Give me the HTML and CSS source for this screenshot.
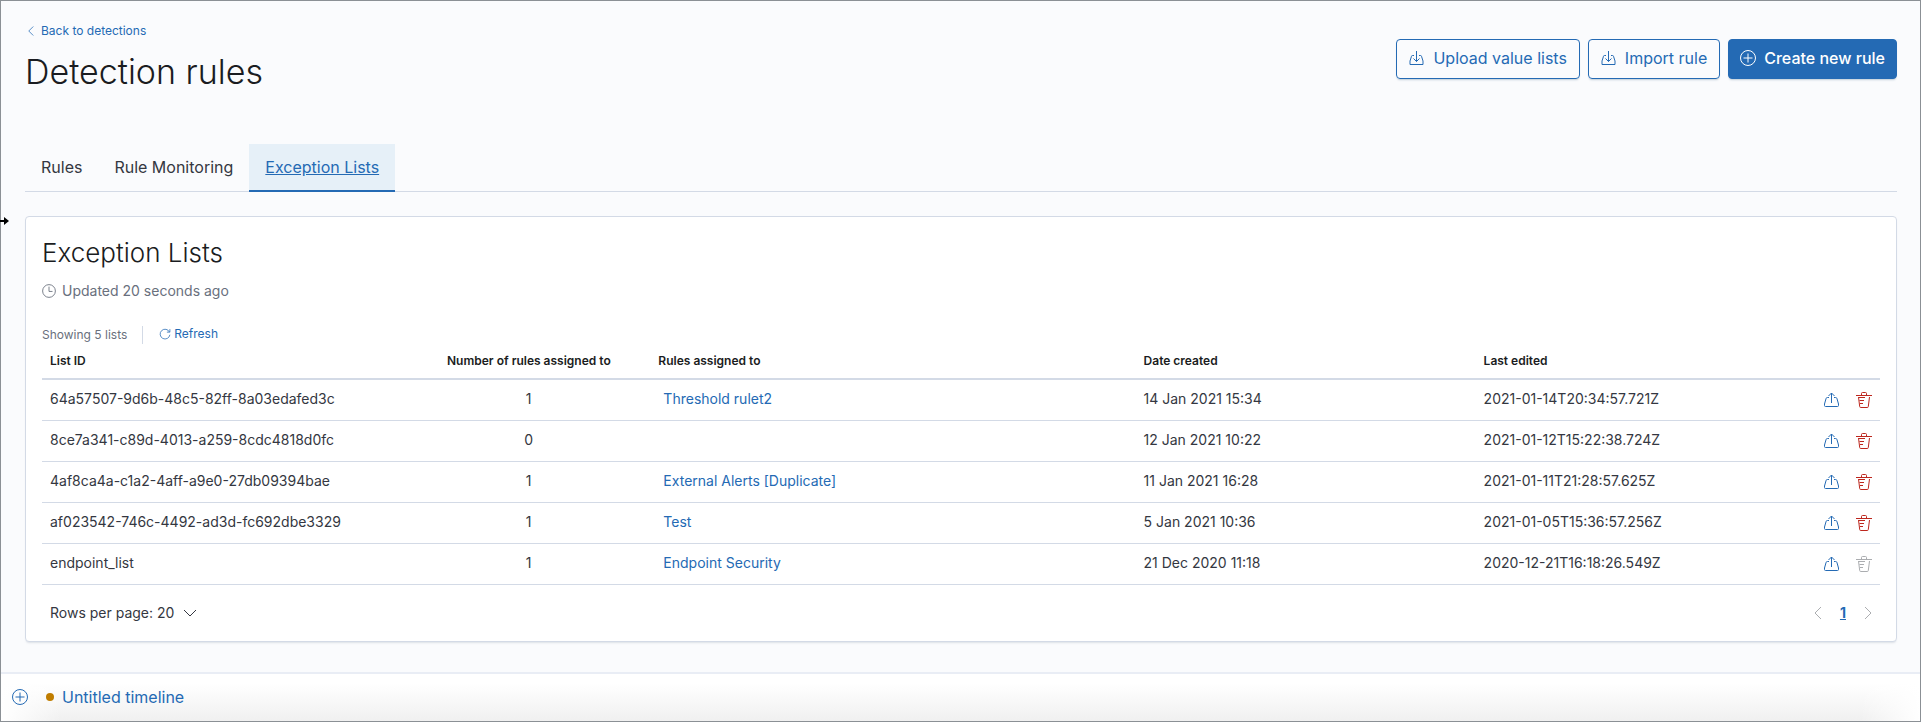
FILE: index.html
```
<!DOCTYPE html>
<html lang="en">
<head>
    <meta charset="UTF-8">
    <meta name="viewport" content="width=device-width, initial-scale=1.0">
    <title>Detection rules</title>
    <link rel="stylesheet" href="styles.css">
</head>
<body>
    <svg class="sprite" aria-hidden="true">
        <symbol id="icon-import" viewBox="0 0 16 16">
            <path d="M5 5.500H3.500a1 1 0 0 0-1 .8L1 11v3.500h13V11l-1.500-4.700a1 1 0 0 0-1-.8H10M7.500 1v10.500M4.500 8.500l3 3 3-3"/>
        </symbol>
        <symbol id="icon-export" viewBox="0 0 16 16">
            <path d="M5 5.500H3.500a1.500 1.500 0 0 0-1.500 1.200L.5 12v1.500a1 1 0 0 0 1 1h12a1 1 0 0 0 1-1V12L13 6.700a1.500 1.500 0 0 0-1.500-1.200H10M7.500 11V1M4.500 4l3-3 3 3"/>
        </symbol>
        <symbol id="icon-trash" viewBox="0 0 16 16">
            <path d="M0 3.500h16M5.500 3.500v-2a1 1 0 0 1 1-1h3a1 1 0 0 1 1 1v2M2.500 5l1.200 9.500a1 1 0 0 0 1 1h6.600a1 1 0 0 0 1-1L13.500 5M3 5.500h6M3.500 8.500H8M4 11.500h3"/>
        </symbol>
        <symbol id="icon-plus" viewBox="0 0 16 16">
            <circle cx="8" cy="8" r="7.500"/>
            <path d="M8 3.500v9M3.500 8h9"/>
        </symbol>
        <symbol id="icon-clock" viewBox="0 0 16 16">
            <circle cx="8" cy="8" r="7.300"/>
            <path d="M8 3v5.500h4"/>
        </symbol>
        <symbol id="icon-refresh" viewBox="0 0 16 16">
            <path d="M10.500 5.500h4v-4M14 5.500A6.500 6.500 0 1 0 14.500 9"/>
        </symbol>
        <symbol id="icon-left" viewBox="0 0 16 16">
            <path d="M11 2L5 8l6 6"/>
        </symbol>
        <symbol id="icon-right" viewBox="0 0 16 16">
            <path d="M5 2l6 6-6 6"/>
        </symbol>
        <symbol id="icon-down" viewBox="0 0 16 16">
            <path d="M2 5l6 6 6-6"/>
        </symbol>
    </svg>

    <main class="page">
        <header class="header">
            <div class="heading">
                <a class="back" href="#"><svg class="icon icon-s"><use href="#icon-left"/></svg>Back to detections</a>
                <h1>Detection rules</h1>
            </div>
            <div class="actions">
                <button class="btn" type="button"><svg class="icon"><use href="#icon-import"/></svg>Upload value lists</button>
                <button class="btn" type="button"><svg class="icon"><use href="#icon-import"/></svg>Import rule</button>
                <button class="btn btn-fill" type="button"><svg class="icon"><use href="#icon-plus"/></svg>Create new rule</button>
            </div>
        </header>

        <nav class="tabs">
            <a class="tab" href="#">Rules</a>
            <a class="tab" href="#">Rule Monitoring</a>
            <a class="tab active" href="#">Exception Lists</a>
        </nav>

        <section class="panel">
            <h2>Exception Lists</h2>
            <div class="updated"><svg class="icon icon-m"><use href="#icon-clock"/></svg>Updated 20 seconds ago</div>

            <div class="utility">
                <span class="showing">Showing 5 lists</span>
                <button class="refresh" type="button"><svg class="icon icon-s"><use href="#icon-refresh"/></svg>Refresh</button>
            </div>

            <table class="lists">
                <thead>
                    <tr>
                        <th class="col-id">List ID</th>
                        <th class="col-num">Number of rules assigned to</th>
                        <th class="col-rules">Rules assigned to</th>
                        <th class="col-created">Date created</th>
                        <th class="col-edited">Last edited</th>
                        <th class="col-actions"></th>
                    </tr>
                </thead>
                <tbody>
                    <tr>
                        <td>64a57507-9d6b-48c5-82ff-8a03edafed3c</td>
                        <td class="col-num">1</td>
                        <td><a class="rule" href="#">Threshold rulet2</a></td>
                        <td>14 Jan 2021 15:34</td>
                        <td>2021-01-14T20:34:57.721Z</td>
                        <td>
                            <div class="row-actions">
                                <button class="icon-btn" type="button" aria-label="Export list"><svg class="icon"><use href="#icon-export"/></svg></button>
                                <button class="icon-btn danger" type="button" aria-label="Delete list"><svg class="icon"><use href="#icon-trash"/></svg></button>
                            </div>
                        </td>
                    </tr>
                    <tr>
                        <td>8ce7a341-c89d-4013-a259-8cdc4818d0fc</td>
                        <td class="col-num">0</td>
                        <td></td>
                        <td>12 Jan 2021 10:22</td>
                        <td>2021-01-12T15:22:38.724Z</td>
                        <td>
                            <div class="row-actions">
                                <button class="icon-btn" type="button" aria-label="Export list"><svg class="icon"><use href="#icon-export"/></svg></button>
                                <button class="icon-btn danger" type="button" aria-label="Delete list"><svg class="icon"><use href="#icon-trash"/></svg></button>
                            </div>
                        </td>
                    </tr>
                    <tr>
                        <td>4af8ca4a-c1a2-4aff-a9e0-27db09394bae</td>
                        <td class="col-num">1</td>
                        <td><a class="rule" href="#">External Alerts [Duplicate]</a></td>
                        <td>11 Jan 2021 16:28</td>
                        <td>2021-01-11T21:28:57.625Z</td>
                        <td>
                            <div class="row-actions">
                                <button class="icon-btn" type="button" aria-label="Export list"><svg class="icon"><use href="#icon-export"/></svg></button>
                                <button class="icon-btn danger" type="button" aria-label="Delete list"><svg class="icon"><use href="#icon-trash"/></svg></button>
                            </div>
                        </td>
                    </tr>
                    <tr>
                        <td>af023542-746c-4492-ad3d-fc692dbe3329</td>
                        <td class="col-num">1</td>
                        <td><a class="rule" href="#">Test</a></td>
                        <td>5 Jan 2021 10:36</td>
                        <td>2021-01-05T15:36:57.256Z</td>
                        <td>
                            <div class="row-actions">
                                <button class="icon-btn" type="button" aria-label="Export list"><svg class="icon"><use href="#icon-export"/></svg></button>
                                <button class="icon-btn danger" type="button" aria-label="Delete list"><svg class="icon"><use href="#icon-trash"/></svg></button>
                            </div>
                        </td>
                    </tr>
                    <tr>
                        <td>endpoint_list</td>
                        <td class="col-num">1</td>
                        <td><a class="rule" href="#">Endpoint Security</a></td>
                        <td>21 Dec 2020 11:18</td>
                        <td>2020-12-21T16:18:26.549Z</td>
                        <td>
                            <div class="row-actions">
                                <button class="icon-btn" type="button" aria-label="Export list"><svg class="icon"><use href="#icon-export"/></svg></button>
                                <button class="icon-btn danger" type="button" aria-label="Delete list" disabled><svg class="icon"><use href="#icon-trash"/></svg></button>
                            </div>
                        </td>
                    </tr>
                </tbody>
            </table>

            <div class="pagination">
                <button class="per-page" type="button">Rows per page: 20<svg class="icon"><use href="#icon-down"/></svg></button>
                <div class="pages">
                    <button class="icon-btn" type="button" aria-label="Previous page" disabled><svg class="icon"><use href="#icon-left"/></svg></button>
                    <a class="page-num" href="#">1</a>
                    <button class="icon-btn" type="button" aria-label="Next page" disabled><svg class="icon"><use href="#icon-right"/></svg></button>
                </div>
            </div>
        </section>
    </main>

    <footer class="timeline">
        <button class="icon-btn" type="button" aria-label="Add timeline"><svg class="icon"><use href="#icon-plus"/></svg></button>
        <span class="dot"></span>
        <a class="timeline-link" href="#">Untitled timeline</a>
    </footer>

    <svg class="cursor" viewBox="0 0 10 12" aria-hidden="true">
        <path d="M0 5h4V2l5 4-5 4V7H0z"/>
    </svg>
</body>
</html>
```
FILE: styles.css
```
* {
    box-sizing: border-box;
}

body {
    display: flex;
    flex-direction: column;
    min-height: 100vh;
    margin: 0;
    border: 1px solid #8b9095;
    background: #fafbfd;
    color: #343741;
    font-family: Inter, "Liberation Sans", sans-serif;
    font-size: 14px;
    line-height: 20px;
}

a {
    color: #246ab4;
    text-decoration: none;
}

button {
    padding: 0;
    border: 0;
    background: none;
    color: #246ab4;
    font: inherit;
    cursor: pointer;
}

.sprite {
    display: none;
}

.icon {
    flex: none;
    width: 16px;
    height: 16px;
    fill: none;
    stroke: currentColor;
}

.icon-m {
    width: 14px;
    height: 14px;
}

.icon-s {
    width: 12px;
    height: 12px;
}

.page {
    flex: 1;
    padding: 20px 23px 24px 24px;
}

.header {
    display: flex;
    justify-content: space-between;
    align-items: flex-start;
    height: 123px;
}

.back {
    display: flex;
    align-items: center;
    gap: 4px;
    font-size: 12px;
}

h1, h2 {
    margin: 0;
    color: #1a1c21;
    font-weight: 300;
}

h1 {
    margin-top: 11px;
    font-size: 34px;
    line-height: 40px;
}

.actions {
    display: flex;
    gap: 8px;
    padding-top: 18px;
}

.btn {
    display: flex;
    align-items: center;
    gap: 8px;
    height: 40px;
    padding: 0 12px 2px;
    border: 1px solid #246ab4;
    border-radius: 4px;
    font-size: 16px;
    box-shadow: 0 2px 2px -1px rgba(54, 97, 126, 0.3);
}

.btn-fill {
    padding: 0 11px 2px;
    background: #246ab4;
    color: #fff;
    font-weight: 500;
}

.tabs {
    display: flex;
    border-bottom: 1px solid #d3dae6;
}

.tab {
    margin-bottom: -1px;
    padding: 11px 16px 13px;
    color: #343741;
    font-size: 16px;
    line-height: 24px;
}

.tab.active {
    background: #e6f0f8;
    color: #246ab4;
    text-decoration: underline;
    box-shadow: inset 0 -2px 0 #246ab4;
}

.panel {
    margin-top: 24px;
    padding: 16px;
    border: 1px solid #d3dae6;
    border-radius: 4px;
    background: #fff;
    box-shadow: 0 2px 2px -1px rgba(152, 162, 179, 0.3);
}

h2 {
    font-size: 26px;
    line-height: 40px;
}

.updated {
    display: flex;
    align-items: center;
    gap: 6px;
    margin-top: 8px;
    color: #69707d;
}

.utility {
    display: flex;
    align-items: center;
    margin-top: 24px;
    font-size: 12px;
    line-height: 18px;
}

.showing {
    padding-right: 15px;
    border-right: 1px solid #d3dae6;
    color: #69707d;
}

.refresh {
    display: flex;
    align-items: center;
    gap: 3px;
    margin-left: 16px;
    padding-bottom: 1px;
}

.lists {
    width: 100%;
    border-collapse: collapse;
    table-layout: fixed;
}

.lists th {
    height: 35px;
    padding: 0 8px 1px;
    border-bottom: 2px solid #d3dae6;
    color: #1a1c21;
    font-size: 12px;
    font-weight: 600;
    text-align: left;
}

.lists td {
    height: 41px;
    padding: 0 8px 2px;
    border-bottom: 1px solid #d3dae6;
    white-space: nowrap;
}

.col-id {
    width: 21.6%;
}

.lists .col-num {
    width: 11.5%;
    padding-right: 40px;
    text-align: center;
    white-space: nowrap;
}

.col-rules {
    width: 26.4%;
}

.col-created {
    width: 18.5%;
}

.rule {
    padding-left: 5px;
}

.icon-btn {
    display: flex;
}

.row-actions {
    display: flex;
    justify-content: flex-end;
    gap: 16px;
    padding-top: 2px;
}

.danger {
    color: #bd271e;
}

.icon-btn:disabled {
    color: #abadb0;
    cursor: default;
}

.pagination {
    display: flex;
    justify-content: space-between;
    align-items: center;
    padding: 18px 4px 2px 8px;
}

.per-page {
    display: flex;
    align-items: center;
    gap: 8px;
    color: #343741;
}

.pages {
    display: flex;
    align-items: center;
    gap: 14px;
}

.page-num {
    font-weight: 700;
    text-decoration: underline;
}

.timeline {
    display: flex;
    align-items: center;
    height: 49px;
    padding: 0 11px 2px;
    border-top: 2px solid #e9edf5;
    background:
        linear-gradient(90deg, #fff, transparent 60px calc(100% - 60px), #fff),
        linear-gradient(#fff 20%, #f0f0f0);
}

.dot {
    width: 8px;
    height: 8px;
    margin: 0 8px 0 18px;
    border-radius: 50%;
    background: #c07d00;
}

.timeline-link {
    font-size: 16px;
}

/* resize pointer on the left edge */
.cursor {
    position: absolute;
    top: 215px;
    left: 0;
    width: 10px;
    height: 12px;
}
```
